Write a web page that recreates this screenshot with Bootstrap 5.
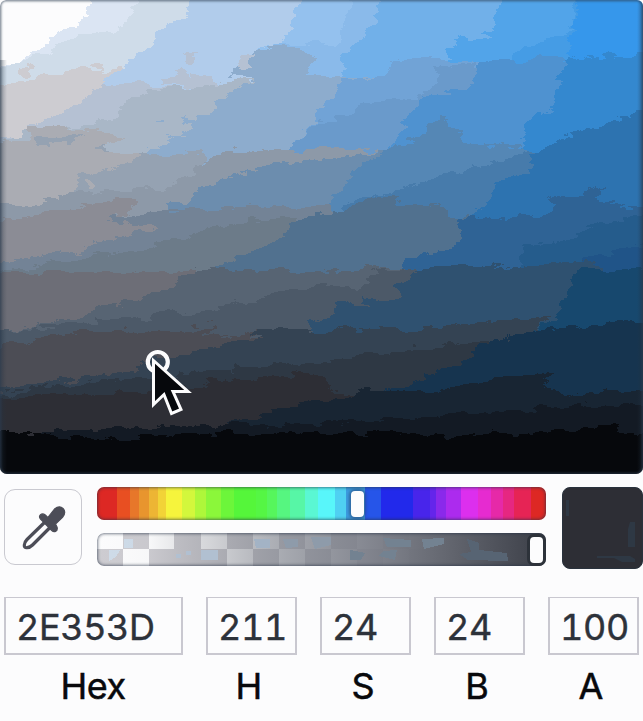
<!DOCTYPE html>
<html lang="en">
<head>
<meta charset="utf-8">
<title>Color picker</title>
<meta name="viewport" content="width=device-width, initial-scale=1">
<link href="https://cdn.jsdelivr.net/npm/bootstrap@5.3.0/dist/css/bootstrap.min.css" rel="stylesheet">
<style>
body{background:#fcfcfd;font-family:Inter,"Liberation Sans",sans-serif;color:#08090c;overflow:hidden}
.picker{width:643px;height:721px}
.shade-area{height:474px;border-radius:6px 6px 7px 7px;overflow:hidden}
.shade-area::after{content:"";position:absolute;inset:0;border-radius:inherit;box-shadow:inset 0 0 2px 1.5px rgba(43,62,82,.55);pointer-events:none}
.controls{margin-top:13px;height:82px;padding-left:4px}
.dropper{width:78px;height:76px;margin-top:2px;border:1.5px solid #c9c9d0;border-radius:11px;background:#fcfcfd}
.sliders{width:449px;margin-left:15px;gap:13px}
.track{height:33px;border-radius:7px;overflow:hidden}
.hue{background:linear-gradient(90deg,#dd2824 20px,#e84f22 0 33px,#e7772a 0 42px,#e8952e 0 52px,#edb534 0 61px,#f2d337 0 69px,#f6f43c 0 85px,#d3f73c 0 98px,#aef73a 0 109px,#8bf73a 0 124px,#6cf63a 0 137px,#55f63a 0 159px,#55f644 0 170px,#56f65c 0 180px,#56f680 0 193px,#57f6a6 0 208px,#5af7d3 0 221px,#58f6fa 0 238px,#4fd0f2 0 249px,#3c9ce0 0 268px,#2655e9 0 284px,#2229eb 0 316px,#4825eb 0 333px,#6425eb 0 339px,#8a29eb 0 349px,#ac2bee 0 364px,#dc2fee 0 381px,#e62bd0 0 394px,#e629a8 0 406px,#e62781 0 417px,#e62455 0 434px,#dd2824 0)}
.track::after{content:"";position:absolute;inset:0;border-radius:inherit;box-shadow:inset 0 0 3px 1px rgba(38,50,70,.6)}
.thumb{top:4px;width:13px;height:26px;border-radius:4px;background:#fcfcfd;z-index:2}
.hue .thumb{left:254px;box-shadow:0 0 3px 2px rgba(40,70,120,.6)}
.alpha .thumb{left:433px;box-shadow:0 0 0 3px #2d323a}
.swatch{width:81px;height:82px;margin-left:16px;border-radius:8px;background:#2d2e35;border:1px solid #29323d}
.fields{margin-top:28px;padding-left:4px;gap:23px}
.field-box{width:91px}
.field-hex{width:179px}
.field-box input{height:58px;border:2px solid #c9c8d0;border-top-width:1px;border-radius:0;padding:3px 0 0 10px;font-size:36px;line-height:52px;color:#2d323a;background:#fcfcfd;font-feature-settings:"tnum";letter-spacing:-.4px;-webkit-text-stroke:.4px #2d323a}
.field-box label{font-size:36px;line-height:44px;margin-top:9px;padding-right:5px;-webkit-text-stroke:.5px #08090c}
.field-hex label{padding-right:1px;letter-spacing:-.5px}
</style>
<script src="https://cdn.jsdelivr.net/npm/bootstrap@5.3.0/dist/js/bootstrap.bundle.min.js"></script>
</head>
<body>
<main class="picker">
<div class="shade-area position-relative">
<svg class="d-block" width="643" height="474" viewBox="0 0 643 474">
<defs><filter id="rough" color-interpolation-filters="sRGB" filterUnits="userSpaceOnUse" x="-20" y="-20" width="690" height="520"><feTurbulence type="fractalNoise" baseFrequency=".045 .11" numOctaves="4" seed="8"/><feDisplacementMap in="SourceGraphic" scale="17" xChannelSelector="R" yChannelSelector="G"/></filter>
<linearGradient id="lf"><stop stop-color="#283443" stop-opacity=".4"/><stop offset="1" stop-color="#283443" stop-opacity="0"/></linearGradient></defs>
<g filter="url(#rough)" shape-rendering="crispEdges">
<path fill="#fcfcfd" d="M-20-20H670V500H-20z"/>
<!-- light, saturated top rows -->
<path fill="#dbe5f3" d="M87-20V16L76 25 52 38 50 44 35 50 20 62-20 72V500H670V-20z"/>
<path fill="#cfdce9" d="M145-20L127 18 125 28 108 33 80 32 60 45 45 54 22 60-20 78V500H670V-20z"/>
<path fill="#b1cceb" d="M197-20L185 18 167 27 154 38 152 45 130 62 125 72 103 82V500H670V-20z"/>
<path fill="#94c1ee" d="M307-20L295 18 288 33 282 43 258 47V500H670V-20z"/>
<path fill="#8abaea" d="M355-20L345 25 335 48 316 44 275 44 255 60V500H670V-20z"/>
<path fill="#71b0e9" d="M386-20L372 28 352 45 342 60V500H670V-20z"/>
<path fill="#52a4e9" d="M507-20L497 20 490 35 475 42 460 36 443 60V500H670V-20z"/>
<path fill="#459ce5" d="M574-20V28L545 42 512 56V500H670V-20z"/>
<path fill="#3697eb" d="M575-20L577 15 570 35V500H670V-20z"/>
<path fill="#cdccd1" d="M-20 93L30 78 70 70 85 66 98 66 102 74 125 67 125 72 103 82 100 500H-20z"/>
<path fill="#b5c1d3" d="M103 84L170 85 215 84V500H-20V140L30 137 30 128 75 106z"/>
<path fill="#a9b7c7" d="M132 97L165 86 225 82 254 78V500H-20V148L30 133 80 124 115 120 116 110z"/>
<path fill="#8daccd" d="M258 50L235 65 230 77 254 78 228 92 210 110 193 120 192 130 170 140 145 155V500H670V77H303L316 57 295 48 270 45z"/>
<path fill="#8abaea" d="M316 57L345 55 343 77H303z"/>
<path fill="#71a3d6" d="M347 79L384 77 390 65 400 61 442 59 480 61V500H290L282 152 296 141 310 126 322 111z"/>
<path fill="#8daccd" d="M250 79L347 79 322 111 310 126 296 141 282 154 200 154z"/>
<path fill="#6a9acb" d="M318 119L350 118 362 103 415 98 434 88 438 65 475 62 476 75 490 75V500H270L282 152 296 141z"/>
<path fill="#4f92d0" d="M480 61L570 58 650 57V500H390V150L403 125 410 115 417 100 435 93 468 90z"/>
<path fill="#3488cf" d="M570 53L576 58 670 50V500H510V155L525 147 525 127 535 112 555 108 555 90 560 75z"/>
<!-- muted middle rows -->
<path fill="#95a2b2" d="M-20 156L140 155 205 153V500H-20z"/>
<path fill="#aaacb3" d="M-20 143L30 140 30 128 60 126 88 130 125 135 100 150 140 154 140 160 110 169 75 178 74 194 30 203-20 210z"/>
<path fill="#8d99a8" d="M195 170L215 154 250 150 320 150 378 151V500H-20V207L30 203 65 195 110 190 160 190z"/>
<path fill="#6c8dae" d="M372 153L320 160 287 163 240 173 210 183 192 193 190 202 167 206V500H670V153z"/>
<path fill="#5587b5" d="M395 147L430 133 460 130 463 143 515 145 530 150V500H320V210L348 185 352 173z"/>
<path fill="#477bab" d="M345 203L400 190 450 173 490 165 520 155 540 150V500H340z"/>
<path fill="#2d73b0" d="M533 152L555 140 590 130 620 122 622 115 670 108V500H470V220L490 200 495 184 530 175z"/>
<path fill="#738396" d="M167 209L210 208 280 206 330 205V500H-20V225L60 215 120 217z"/>
<path fill="#8b8c95" d="M-20 224L25 218 60 212 100 203 137 198 130 212 105 220 160 227 120 239 65 252-20 265z"/>
<path fill="#6c7b89" d="M200 233L240 221 300 216V500H-20V273L60 262 130 251z"/>
<path fill="#51718f" d="M310 215L340 210 375 197 400 197 395 203 445 207 450 217 470 217V500H220V265L270 246 290 228z"/>
<path fill="#2f6395" d="M460 218L530 218 550 213 555 200 585 195 600 185 595 200 600 206 670 210V500H405V258L445 247 459 238z"/>
<path fill="#255c8c" d="M670 212L600 222 590 233 550 243 523 247 520 268 670 270z"/>
<path fill="#205488" d="M670 239L610 252 583 260V280H670z"/>
<path fill="#576473" d="M-20 272H200L215 268 320 272 400 267 420 267V500H-20z"/>
<path fill="#6d6e77" d="M-20 272H195L165 289 145 299 105 306 60 321-20 336z"/>
<path fill="#4c5968" d="M-20 335L60 324 105 321 160 315 235 305 280 290 320 285 358 290 370 275 385 270 420 267V500H-20z"/>
<path fill="#2f5170" d="M412 272L440 266 520 266 582 261 600 265V500H310V321L335 315 335 305 345 303 398 298 400 285 412 277z"/>
<path fill="#17486e" d="M583 269H670V500H525V335L555 320 567 300 570 277z"/>
<path fill="#4c4d55" d="M-20 351L20 344 60 335 90 332 180 330 215 326 200 337 265 334V500H-20z"/>
<path fill="#344353" d="M-20 393L65 380 135 371 150 355 175 357 205 350 255 335 280 330 400 328 455 325 490 322 520 320 553 315 530 335V500H-20z"/>
<path fill="#2e3844" d="M-20 395L20 390 70 384 140 378 190 372 280 365 320 362 400 350 470 342 490 340V500H-20z"/>
<path fill="#16344f" d="M478 345L500 342 505 337 560 328 610 324 670 317V500H380V391L426 380 427 372 445 368 475 355z"/>
<path fill="#2d2e35" d="M-20 397L60 395 140 392 200 385 260 376 325 373 330 390 360 395 350 500H-20z"/>
<path fill="#182533" d="M230 425L265 414 300 403 335 400 365 392 450 390 480 382 555 374 545 388 575 394 670 391V500H220z"/>
<path fill="#131a24" d="M-20 434L50 432 115 428 190 426 260 425 320 424 440 416 500 412 560 407 670 400V500H-20z"/>
<path fill="#06080c" d="M-20 431L40 432 60 438 140 436 220 434 320 431 410 435 500 434 570 432 597 426 619 425 621 432 670 437V500H-20z"/>
<!-- isolated patches -->
<path fill="#8daccd" d="M155 119h9v3h-9zM183 117l18 2-5 4-14-2z"/>
<path fill="#b5c1d3" d="M185 55l12 1-8 9-5-2zM162 82l22-14 11 17zM235 64l12-12 10 2-14 16zM193 77l20 1 2 7-24-1z"/>
<path fill="#cdccd1" d="M14 73l15-8 6 2-9 8z"/>
<path fill="#5587b5" d="M420 137l20-22 7 2 1 12 13 1-4 12z"/>
<path fill="#2f6395" d="M550 201l14-8 18 3 22-11-8 15 18 2-15 8-25-2-20 3z"/>
<path fill="#182533" d="M480 382l70-8-9 15-65-3z"/>
<path fill="#aaacb3" d="M35 186l12-2v8l-12 2zM85 179l6-1v9l-6 1z"/>
<path fill="#95a2b2" d="M35 138l50-3-15 9-35 1zM90 151l13-5 4 5z"/>
<path fill="#71b0e9" d="M450 100"/>
</g>
<path fill="url(#lf)" d="M0 60H7V474H0z"/>
<path fill="url(#lf)" transform="matrix(-1 0 0 1 643 0)" d="M0 0H6V474H0z"/>
<circle cx="157.800" cy="362" r="10" fill="none" stroke="#fcfcfd" stroke-width="4.200"/>
<path d="M153.500 360.500v44l10.500-10 7.500 19 9.500-4-8-18h15z" fill="#06080c" stroke="#fcfcfd" stroke-width="3"/>
</svg>
</div>
<section class="controls d-flex align-items-start">
<button class="dropper btn p-0 d-flex" aria-label="Pick a color from the screen">
<svg width="75" height="73" viewBox="5 490 75 73">
<path d="M45.500 521.500L27 539.500q-2.500 2.500-2.700 5.500-.2 3 2.700 2.700 3-.2 5.500-2.700L51 526.500" fill="none" stroke="#4c4d57" stroke-width="3.200" stroke-linejoin="round"/>
<path d="M47.800 517.500L54.500 509q5-4 8.500-.5t-.2 8.500l-7.300 7 1.500 3q1 3-1.500 4.500-2 .8-4-1.200L40.500 519q-2-2.300 0-4.300 2-1.700 4.800.3z" fill="#4c4d57" stroke="#4c4d57" stroke-width="1.200" stroke-linejoin="round"/>
</svg>
</button>
<div class="sliders d-flex flex-column">
<div class="track hue position-relative"><span class="thumb position-absolute"></span></div>
<div class="track alpha position-relative">
<svg class="d-block" width="449" height="33" shape-rendering="crispEdges">
<defs><pattern id="check" width="52" height="33" patternUnits="userSpaceOnUse"><path fill="#fcfcfd" d="M0 0h52v33H0z"/><path fill="#cdccd1" d="M26 0h26v16H26zM0 16h26v17H0z"/></pattern>
<linearGradient id="fade"><stop stop-color="#505660" stop-opacity="0"/><stop offset=".12" stop-color="#505660" stop-opacity=".03"/><stop offset=".25" stop-color="#686c76" stop-opacity=".27"/><stop offset=".42" stop-color="#787c86" stop-opacity=".65"/><stop offset=".6" stop-color="#7c7f89" stop-opacity=".93"/><stop offset=".75" stop-color="#696c75"/><stop offset="1" stop-color="#3b3e47"/></linearGradient></defs>
<path fill="url(#check)" d="M0 0h449v33H0z"/>
<path fill="#cfdce9" d="M27 6h9v9h-9zM12 17h11l-4 7-7 4z"/>
<path fill="#cdccd1" d="M77 0h27v33H77z"/>
<path fill="url(#fade)" d="M0 0h449v33H0z"/>
<path fill="#b1c0d1" d="M79 21h5v4h-5zM89 18h5v4h-5zM104 17h17v10h-17z"/>
<path fill="#a3b3c5" d="M157 6h16v9h-14zM189 7h10v7h-10z"/>
<path fill="#8e9baa" d="M214 4h20v8l-16 4zM186 6h15v8l-12 1z"/>
<path fill="#738291" d="M253 17l15 3-4 7h-11zM286 5l28 2v7h-24zM286 18l14-1-2 10-16-4zM325 6l22-1v6l-20 5z"/>
<path fill="#576473" d="M370 6l12 4v7l28 3 1 8-40-1-9-6 12-2z"/>
</svg>
<span class="thumb position-absolute"></span></div>
</div>
<div class="swatch"><svg class="d-block" width="79" height="80"><path fill="#2e3844" d="M67 34h5v25h-7V41zM34 68h33l5 3v3H59l-8-4H34zM3 12h3v16H3z"/></svg></div>
</section>
<form class="fields d-flex text-center">
<div class="field-box field-hex"><input class="form-control" id="hex" value="2E353D"><label class="d-block" for="hex">Hex</label></div>
<div class="field-box"><input class="form-control" id="h" value="211"><label class="d-block" for="h">H</label></div>
<div class="field-box"><input class="form-control" id="s" value="24"><label class="d-block" for="s">S</label></div>
<div class="field-box"><input class="form-control" id="b" value="24"><label class="d-block" for="b">B</label></div>
<div class="field-box"><input class="form-control" id="a" value="100"><label class="d-block" for="a">A</label></div>
</form>
</main>
</body>
</html>
